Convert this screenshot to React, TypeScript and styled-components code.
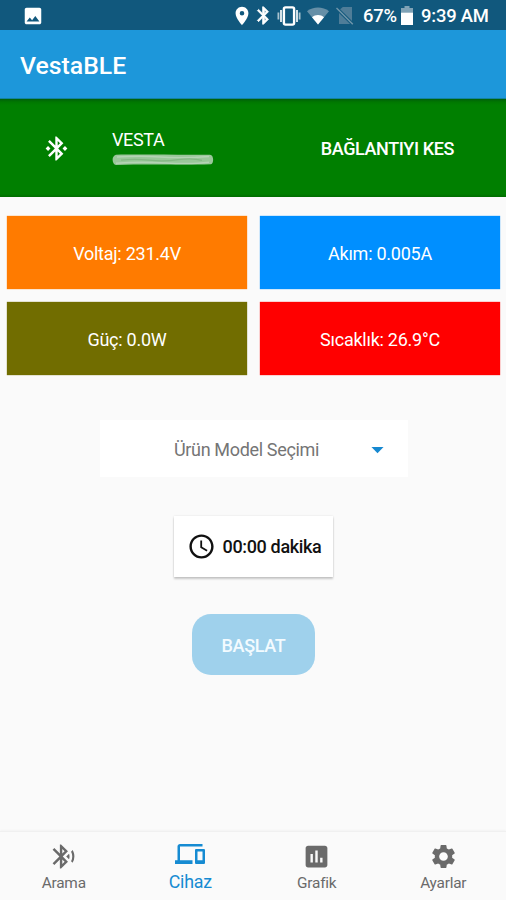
import React from "react";
import styled, { createGlobalStyle } from "styled-components";
import {
  MdImage,
  MdLocationOn,
  MdBluetooth,
  MdBluetoothConnected,
  MdBluetoothSearching,
  MdDevices,
  MdAssessment,
  MdSettings,
  MdAccessTime,
  MdArrowDropDown,
} from "react-icons/md";

const GlobalStyle = createGlobalStyle`
  * { box-sizing: border-box; }
  body { margin: 0; background: #fafafa; font-family: Roboto, "Noto Sans", sans-serif; }
  button { font-family: inherit; border: 0; padding: 0; }
`;

const Screen = styled.div`
  width: 506px;
  height: 900px;
  display: flex;
  flex-direction: column;
  background: #fafafa;
  overflow: hidden;
`;

const StatusBar = styled.header`
  height: 30px;
  flex: none;
  display: flex;
  align-items: center;
  padding: 1px 18px 0 22px;
  background: #11587d;
  color: #fff;
  svg { display: block; flex: none; }
`;

const Spacer = styled.div`
  flex: 1;
`;

const StatusIcons = styled.div`
  display: flex;
  align-items: center;
  height: 28px;
`;

const StatusIcon = styled.span<{ $gap: number; $bold?: boolean }>`
  display: flex;
  margin-right: ${(p) => p.$gap}px;
  ${(p) => p.$bold && "path:not([fill='none']) { stroke: #fff; stroke-width: 0.9px; }"}
`;

const StatusText = styled.span<{ $width: number }>`
  width: ${(p) => p.$width}px;
  padding-top: 1px;
  font-size: 18.4px;
  letter-spacing: -0.2px;
  line-height: 28px;
  font-weight: 500;
  white-space: nowrap;
`;

const AppBar = styled.div`
  height: 69px;
  flex: none;
  display: flex;
  align-items: center;
  padding: 2px 20px 0;
  background: #1d97da;
  border-bottom: 1px solid #14829f;
`;

const Title = styled.h1`
  margin: 0;
  color: #fff;
  font-size: 24.8px;
  font-weight: 500;
`;

const Connection = styled.section`
  height: 98px;
  flex: none;
  display: flex;
  padding: 0 52px 0 42px;
  align-items: center;
  color: #fff;
  background: linear-gradient(#00600a 0, #007700 3px, #007f00 6px, #007f00 95px, #006c00 98px);
`;

const Device = styled.div`
  margin: 0 0 0 41px;
  display: flex;
  flex-direction: column;
  gap: 4px;
`;

const DeviceName = styled.div`
  font-size: 18px;
  letter-spacing: -0.35px;
  line-height: 20px;
`;

const Disconnect = styled.button`
  padding-top: 1px;
  background: transparent;
  color: #fff;
  font-size: 18px;
  letter-spacing: -0.38px;
  font-weight: 500;
  line-height: 20px;
`;

const Readings = styled.section`
  flex: none;
  display: grid;
  grid-template-columns: 1fr 1fr;
  grid-auto-rows: 73px;
  gap: 13px 13px;
  padding: 19px 6px 0 7px;
`;

const Reading = styled.div<{ $color: string }>`
  display: flex;
  align-items: center;
  justify-content: center;
  padding-top: 1px;
  background: ${(p) => p.$color};
  box-shadow: 0 0 1px ${(p) => p.$color};
  color: #fff;
  font-size: 18px;
  letter-spacing: -0.25px;
`;

const Controls = styled.main`
  flex: 1;
  display: flex;
  flex-direction: column;
  align-items: center;
`;

const ModelSelect = styled.button`
  width: 308px;
  height: 57px;
  margin: 45px 0 0 2px;
  display: grid;
  grid-template-columns: 1fr 30px;
  align-items: center;
  padding: 2px 15px 0 30px;
  background: #fff;
  color: #757575;
  font-size: 18px;
  letter-spacing: -0.34px;
  svg { display: block; color: #1688d0; }
`;

const TimeButton = styled.button`
  width: 159px;
  height: 61px;
  margin: 39px 0 0 1px;
  display: flex;
  align-items: center;
  gap: 7px;
  padding-left: 12.5px;
  background: #fff;
  color: #111;
  font-size: 18px;
  letter-spacing: -0.34px;
  font-weight: 500;
  box-shadow: 0 2px 2px rgba(0, 0, 0, 0.2), 0 0 2px rgba(0, 0, 0, 0.1);
`;

const StartButton = styled.button`
  width: 123px;
  height: 61px;
  margin: 37px 0 0 1px;
  padding-top: 2px;
  border-radius: 19px;
  background: #9fd1ec;
  color: #f3fbff;
  font-size: 18px;
  letter-spacing: -0.34px;
  font-weight: 500;
`;

const BottomNav = styled.nav`
  height: 69px;
  flex: none;
  display: grid;
  grid-template-columns: repeat(4, 1fr);
  background: #fafafa;
  border-top: 1px solid #f0f0f0;
  box-shadow: 0 -1px 2px rgba(0, 0, 0, 0.03);
`;

const NavItem = styled.a<{ $active?: boolean }>`
  display: flex;
  flex-direction: column;
  align-items: center;
  padding: ${(p) => (p.$active ? 7 : 10)}px 0 0 1px;
  color: ${(p) => (p.$active ? "#168bd2" : "#6a6a6a")};
  font-size: ${(p) => (p.$active ? 17.8 : 15.4)}px;
  letter-spacing: -0.22px;
  line-height: 20px;
  span { margin-top: ${(p) => (p.$active ? 3 : 2)}px; }
  svg { display: block; }
`;

const VibrateIcon = () => (
  <svg width="24" height="20" viewBox="0 0 24 20" fill="none">
    <rect x="6.9" y="1.4" width="10.2" height="17.2" rx="1.6" stroke="#fff" strokeWidth="2.4" />
    <path d="M4 4v12M20 4v12" stroke="#d3e1e8" strokeWidth="2" />
    <path d="M1.4 6.5v7M22.6 6.5v7" stroke="#a9c3d0" strokeWidth="1.8" />
  </svg>
);

const WifiIcon = () => (
  <svg width="22" height="18" viewBox="0 0 22 18">
    <path d="M0 4.2C6.2-.8 15.8-.8 22 4.2L11 17.6z" fill="#668fa7" />
    <path d="M5 10.2c3.4-3 8.6-3 12 0l-6 7.4z" fill="#fff" />
  </svg>
);

const NoSimIcon = () => (
  <svg width="18" height="19" viewBox="0 0 18 19">
    <path d="M3 4.2 6.8 1H16v17H3z" fill="#4f7d98" />
    <path d="M.5 2 16.8 18.3" stroke="#11587d" strokeWidth="3.4" />
    <path d="M.5 2 16.8 18.3" stroke="#6f95aa" strokeWidth="1.5" />
  </svg>
);

const BatteryIcon = () => (
  <svg width="12" height="19" viewBox="0 0 12 19">
    <path d="M3.5 0h5v2H12v6H0V2h3.5z" fill="#7fa2b6" />
    <path d="M0 6.7h12V19H0z" fill="#fff" />
  </svg>
);

const RedactedAddress = () => (
  <svg width="102" height="12" viewBox="0 0 102 12">
    <path d="M4 .8C30 .2 70 1.2 98 .7c4 .2 4 8.5 1 9.5-28 .8-68-.3-95 .8-4-.4-5-9 0-10.2z" fill="#9ac79a" />
    <path d="M5 3q22-1.5 43 0t49-.6M4 9.2q24-1.6 50-.2t43-.8" fill="none" stroke="#b5d3b5" strokeWidth="1.5" />
    <path d="M9 6.2q13-1.6 28 0t29-.5 24 .6" fill="none" stroke="#86b786" strokeWidth="1.2" />
  </svg>
);

const readings = [
  { text: "Voltaj: 231.4V", color: "#ff7b00" },
  { text: "Akım: 0.005A", color: "#008fff" },
  { text: "Güç: 0.0W", color: "#716d00" },
  { text: "Sıcaklık: 26.9°C", color: "#ff0000" },
];

const tabs = [
  { label: "Arama", Icon: MdBluetoothSearching, size: 29 },
  { label: "Cihaz", Icon: MdDevices, size: 30, active: true },
  { label: "Grafik", Icon: MdAssessment, size: 29 },
  { label: "Ayarlar", Icon: MdSettings, size: 29 },
];

export default function App() {
  return (
    <>
      <GlobalStyle />
      <Screen>
        <StatusBar>
          <MdImage size={22} />
          <Spacer />
          <StatusIcons>
            <StatusIcon $gap={0}><MdLocationOn size={22} /></StatusIcon>
            <StatusIcon $gap={3} $bold><MdBluetooth size={21} /></StatusIcon>
            <StatusIcon $gap={6}><VibrateIcon /></StatusIcon>
            <StatusIcon $gap={7}><WifiIcon /></StatusIcon>
            <StatusIcon $gap={9}><NoSimIcon /></StatusIcon>
            <StatusText $width={38}>67%</StatusText>
            <StatusIcon $gap={8}><BatteryIcon /></StatusIcon>
            <StatusText $width={67}>9:39 AM</StatusText>
          </StatusIcons>
        </StatusBar>
        <AppBar>
          <Title>VestaBLE</Title>
        </AppBar>
        <Connection>
          <MdBluetoothConnected size={29} />
          <Device>
            <DeviceName>VESTA</DeviceName>
            <RedactedAddress />
          </Device>
          <Spacer />
          <Disconnect>BAĞLANTIYI KES</Disconnect>
        </Connection>
        <Readings>
          {readings.map((r) => (
            <Reading key={r.text} $color={r.color}>{r.text}</Reading>
          ))}
        </Readings>
        <Controls>
          <ModelSelect>
            Ürün Model Seçimi
            <MdArrowDropDown size={29} />
          </ModelSelect>
          <TimeButton>
            <MdAccessTime size={29} />
            00:00 dakika
          </TimeButton>
          <StartButton>BAŞLAT</StartButton>
        </Controls>
        <BottomNav>
          {tabs.map(({ label, Icon, size, active }) => (
            <NavItem key={label} $active={active}>
              <Icon size={size} />
              <span>{label}</span>
            </NavItem>
          ))}
        </BottomNav>
      </Screen>
    </>
  );
}
